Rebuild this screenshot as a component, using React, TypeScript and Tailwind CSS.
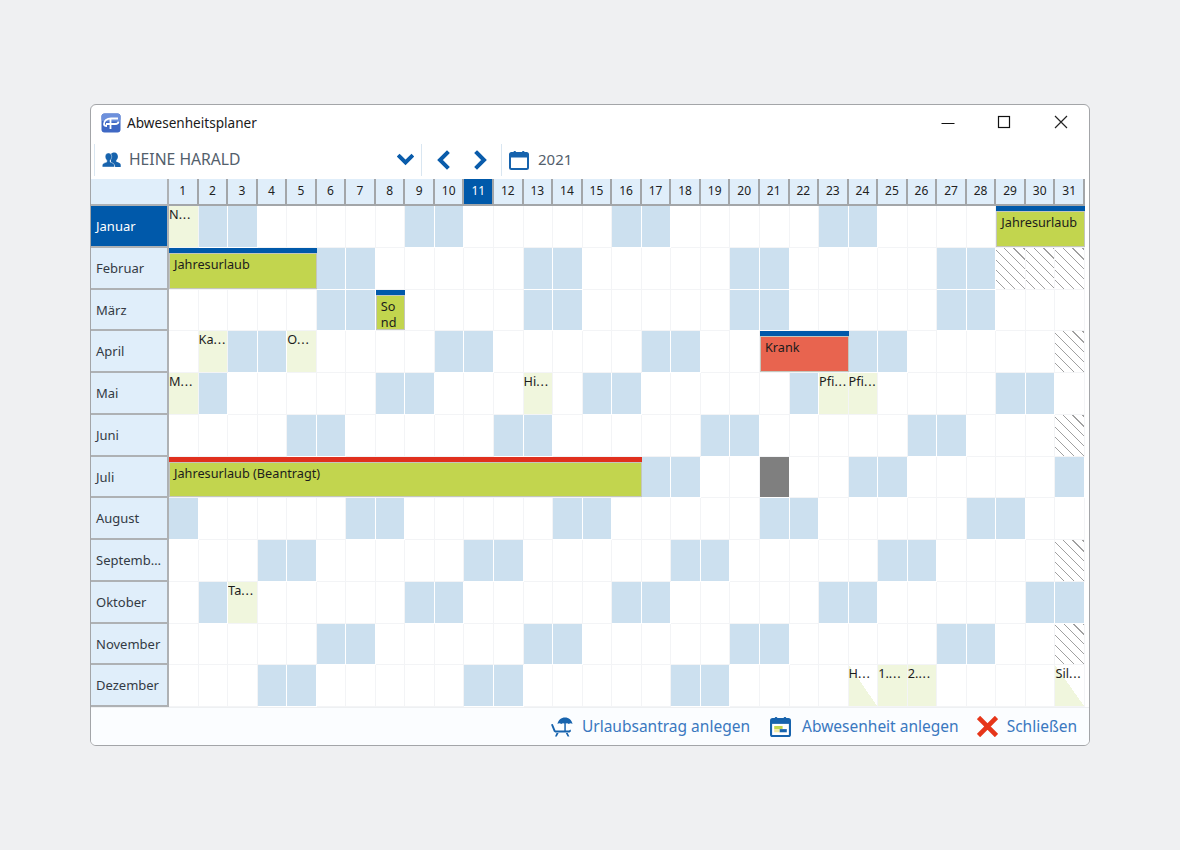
import React from "react";

type Ev = { day: number; span: string; n: number; t: React.ReactNode; bar: string; fill: string };

const months: { name: string; w: number[]; f?: Record<number, string>; x?: number[]; tri?: Record<number, string>; gray?: number[]; ev?: Ev[] }[] = [
  { name: "Januar", w: [2, 3, 9, 10, 16, 17, 23, 24], f: { 1: "N" }, ev: [{ day: 29, span: "col-span-3", n: 3, t: "Jahresurlaub", bar: "bg-[#0059aa]", fill: "bg-[#c2d54e]" }] },
  { name: "Februar", w: [6, 7, 13, 14, 20, 21, 27, 28], x: [29, 30, 31], ev: [{ day: 1, span: "col-span-5", n: 5, t: "Jahresurlaub", bar: "bg-[#0059aa]", fill: "bg-[#c2d54e]" }] },
  { name: "März", w: [6, 7, 13, 14, 20, 21, 27, 28], ev: [{ day: 8, span: "col-span-1", n: 1, t: <>So<br />nd</>, bar: "bg-[#0059aa]", fill: "bg-[#c2d54e]" }] },
  { name: "April", w: [3, 4, 10, 11, 17, 18, 24, 25], f: { 2: "Ka", 5: "O" }, x: [31], ev: [{ day: 21, span: "col-span-3", n: 3, t: "Krank", bar: "bg-[#0059aa]", fill: "bg-[#e8644f]" }] },
  { name: "Mai", w: [2, 8, 9, 15, 16, 22, 29, 30], f: { 1: "M", 13: "Hi", 23: "Pfi", 24: "Pfi" } },
  { name: "Juni", w: [5, 6, 12, 13, 19, 20, 26, 27], x: [31] },
  { name: "Juli", w: [17, 18, 24, 25, 31], gray: [21], ev: [{ day: 1, span: "col-span-16", n: 16, t: "Jahresurlaub (Beantragt)", bar: "bg-[#e0301e]", fill: "bg-[#c2d54e]" }] },
  { name: "August", w: [1, 7, 8, 14, 15, 21, 22, 28, 29] },
  { name: "Septemb…", w: [4, 5, 11, 12, 18, 19, 25, 26], x: [31] },
  { name: "Oktober", w: [2, 9, 10, 16, 17, 23, 24, 30, 31], f: { 3: "Ta" } },
  { name: "November", w: [6, 7, 13, 14, 20, 21, 27, 28], x: [31] },
  { name: "Dezember", w: [4, 5, 11, 12, 18, 19], f: { 25: "1.", 26: "2." }, tri: { 24: "H", 31: "Sil" } },
];

const days = Array.from({ length: 31 }, (_, i) => i + 1);

const Trunc = ({ t }: { t: string }) => (
  <>
    {t}
    <span className="tracking-[0.8px]">...</span>
  </>
);

function MonthRow({ m, active }: { m: (typeof months)[number]; active: boolean }) {
  const cells: React.ReactNode[] = [];
  let d = 1;
  while (d <= 31) {
    const ev = m.ev?.find((e) => e.day === d);
    if (ev) {
      cells.push(
        <div key={d} className={`${ev.span} flex flex-col border-b border-[#f3f4f6]`}>
          <div className={`h-[5px] shrink-0 ${ev.bar}`} />
          <div className={`flex-1 min-h-0 overflow-hidden border border-[#c4c6bc] pl-[4px] text-[12.700px] leading-[16px] pt-[2px] text-[#1c1c1c] ${ev.fill}`}>{ev.t}</div>
        </div>
      );
      d += ev.n;
      continue;
    }
    const base = "min-w-0 overflow-hidden whitespace-nowrap text-[12.700px] leading-[15px] text-[#1c1c1c] border-r border-b border-[#f3f4f6]";
    if (m.w.includes(d)) cells.push(<div key={d} className={`${base} bg-[#cce0ef] border-white`} />);
    else if (m.f?.[d]) cells.push(<div key={d} className={`${base} bg-[#f0f6dd] border-[#f0f6dd] pt-[1px]`}><Trunc t={m.f[d]} /></div>);
    else if (m.tri?.[d]) cells.push(<div key={d} className={`${base} bg-[linear-gradient(to_top_right,#f0f6dd_50%,#ffffff_50%)] pt-[1px]`}><Trunc t={m.tri[d]} /></div>);
    else if (m.x?.includes(d)) cells.push(<div key={d} className={`${base} bg-[repeating-linear-gradient(45deg,#ffffff_0px,#ffffff_6px,#a0a0a0_6px,#a0a0a0_7px)]`} />);
    else if (m.gray?.includes(d)) cells.push(<div key={d} className={`${base} bg-[#7f7f7f] border-white`} />);
    else cells.push(<div key={d} className={`${base} bg-white`} />);
    d++;
  }
  return (
    <>
      <div className={`flex items-center pl-[5px] pt-[2px] text-[13px] border-r-2 border-b-2 border-[#aeb1b4] ${active ? "bg-[#0059aa] text-white" : "bg-[#e0eefa] text-[#333a44]"}`}>{m.name}</div>
      {cells}
    </>
  );
}

const Users = ({ className }: { className?: string }) => (
  <svg viewBox="0 0 20 17" className={className} fill="#1763ad">
    <path d="M13 0.500c2.400 0 3.800 1.800 3.800 4.200 0 1.700-.7 3.200-1.700 4v1.600c2.500.7 4.700 1.700 4.700 3.200V16h-5.800c0-2.200-2-3.600-4.500-4.700V8.800C8.600 8 8 6.400 8 4.700c0-2.400 2.600-4.200 5-4.200Z" />
    <path d="M6.800 1c2.200 0 3.400 1.600 3.400 3.900 0 1.600-.7 3-1.600 3.800v2c2.400.8 4.600 1.900 4.600 3.500V16H.2v-1.800c0-1.600 2.200-2.700 4.800-3.500v-2C4 7.900 3.300 6.500 3.300 4.900 3.300 2.600 4.600 1 6.800 1Z" stroke="#fff" strokeWidth=".5" />
  </svg>
);

const Chevron = ({ d, className }: { d: string; className?: string }) => (
  <svg viewBox="0 0 16 20" className={className} fill="none" stroke="#0a5cab" strokeWidth="4" strokeLinecap="square" strokeLinejoin="miter">
    <path d={d} />
  </svg>
);

const CalendarIcon = ({ className, note }: { className?: string; note?: boolean }) => (
  <svg viewBox="0 0 20 20" className={className}>
    <rect x="1" y="3" width="18" height="16" rx="1.500" fill="#fff" stroke="#1763ad" strokeWidth="2" />
    <rect x="1" y="3" width="18" height="4.500" fill="#1763ad" />
    <rect x="4.500" y="1" width="2.500" height="4" rx="1" fill="#1763ad" />
    <rect x="13" y="1" width="2.500" height="4" rx="1" fill="#1763ad" />
    {note && <rect x="4" y="9.500" width="8" height="3" fill="#c2d54e" />}
    {note && <rect x="9" y="12.500" width="7" height="3" fill="#1763ad" />}
    {note && <rect x="4" y="12.500" width="5" height="3" fill="#f4e9a0" />}
  </svg>
);

const Beach = ({ className }: { className?: string }) => (
  <svg viewBox="0 0 23 20" className={className} fill="#1763ad">
    <path d="M6.500 7C7 3.200 10.300 .5 14 .5S21 3.200 21.500 7c-1.200-1-2.500-1-3.700 0-1-1-2.500-1-3.800 0-1.200-1-2.600-1-3.700 0-1.400-1-2.600-1-3.800 0Z" />
    <rect x="13.300" y="6.500" width="1.500" height="8" />
    <path d="M0 7.500l1.800-.5 2.700 6.500H18l1.500-1 .5 1.700-1.500 1.300H4.200L2.800 14.500Z" />
    <path d="M5.500 16L4 19.500h1.800L7.600 16Zm9.300 0l1.800 3.500h1.800L16.700 16Z" />
  </svg>
);

const Logo = () => (
  <svg viewBox="0 0 20 20" className="w-[20px] h-[20px]">
    <rect x="0.500" y="0.500" width="19" height="19" rx="3" fill="#3f68c4" />
    <rect x="0.500" y="0.500" width="19" height="8" rx="3" fill="#6d90dc" />
    <path d="M3 11c0-3.500 3-5.500 7-5.500h7" fill="none" stroke="#fff" strokeWidth="1.800" />
    <path d="M5 11h9c2.500 0 3.500-1.200 3.500-2.500" fill="none" stroke="#fff" strokeWidth="1.800" />
    <path d="M9.500 6v10M3 11c0 1.200 1.200 2 3 2" fill="none" stroke="#fff" strokeWidth="1.800" />
  </svg>
);

export default function App() {
  return (
    <div className="w-[1180px] h-[850px] bg-[#eff0f2] pt-[104px] pl-[90px] font-['Noto_Sans',sans-serif]">
      <div className="w-[1000px] h-[642px] bg-white border border-[#a3a5a8] rounded-[6px] overflow-hidden flex flex-col">
        <div className="h-[36px] shrink-0 flex items-center pl-[10px]">
          <Logo />
          <span className="ml-[6px] mt-[1px] text-[13.600px] text-[#1a1a1a]">Abwesenheitsplaner</span>
          <div className="ml-auto flex items-center mb-[2px]">
            <svg viewBox="0 0 14 14" className="w-[14px] h-[14px] mr-[42px] mt-[1px]"><path d="M0.500 7.500h13" stroke="#111" strokeWidth="1" /></svg>
            <svg viewBox="0 0 14 14" className="w-[14px] h-[14px] mr-[43px]"><rect x="1.500" y="1.500" width="11" height="11" fill="none" stroke="#111" strokeWidth="1.200" /></svg>
            <svg viewBox="0 0 14 14" className="w-[14px] h-[14px] mr-[21px]"><path d="M1 1l12 12M13 1L1 13" stroke="#222" strokeWidth="1.200" /></svg>
          </div>
        </div>
        <div className="h-[38px] shrink-0 flex items-center pl-[3px]">
          <div className="w-[327px] h-[32px] border-l border-[#d9e6f1] flex items-center pl-[7px]">
            <Users className="w-[19px] h-[16px]" />
            <span className="ml-[8px] text-[15.700px] text-[#53606c]">HEINE HARALD</span>
            <Chevron d="M2 6.500l6 6 6-6" className="w-[17px] h-[20px] ml-auto mr-[7px]" />
          </div>
          <div className="h-[32px] border-l border-[#d9e6f1] flex items-center pl-[14px] w-[80px]">
            <Chevron d="M11 3L4 10l7 7" className="w-[16px] h-[20px]" />
            <Chevron d="M5 3l7 7-7 7" className="w-[16px] h-[20px] ml-[20px]" />
          </div>
          <div className="h-[32px] border-l border-[#d9e6f1] flex items-center pl-[7px]">
            <CalendarIcon className="w-[20px] h-[20px]" />
            <span className="ml-[9px] mb-[1px] text-[15px] text-[#53606c]">2021</span>
          </div>
        </div>
        <div className="w-[994px] h-[528px] shrink-0 grid grid-cols-[78px_repeat(31,minmax(0,1fr))] grid-rows-[27px_repeat(12,minmax(0,1fr))]">
          <div className="bg-[#e0eefa] border-r-2 border-b-2 border-[#aeb1b4]" />
          {days.map((d) => (
            <div key={d} className={`flex items-center justify-center pb-[1px] text-[12px] border-r-2 border-b-2 border-[#a3a6a9] ${d === 11 ? "bg-[#0059aa] text-white" : "bg-[#e0eefa] text-[#222]"}`}>{d}</div>
          ))}
          {months.map((m, i) => (
            <MonthRow key={m.name} m={m} active={i === 0} />
          ))}
        </div>
        <div className="flex-1 bg-[#fbfdff] border-t border-[#eef0f2] flex items-center justify-end pr-[12px] text-[15.500px] text-[#3a78c0]">
          <Beach className="w-[23px] h-[20px]" />
          <span className="ml-[8px]">Urlaubsantrag anlegen</span>
          <CalendarIcon note className="w-[21px] h-[21px] ml-[20px]" />
          <span className="ml-[11px]">Abwesenheit anlegen</span>
          <svg viewBox="0 0 20 20" className="w-[21px] h-[21px] ml-[18px]"><path d="M3 3l14 14M17 3L3 17" stroke="#e63519" strokeWidth="4.500" strokeLinecap="square" /></svg>
          <span className="ml-[9px]">Schließen</span>
        </div>
      </div>
    </div>
  );
}
